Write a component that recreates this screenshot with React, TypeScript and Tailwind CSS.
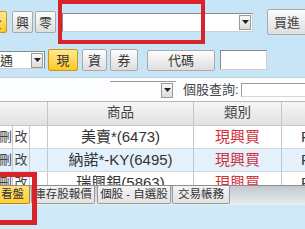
import React from "react";

const btn =
  "flex items-center justify-center shrink-0 border border-[#a9a9a9] rounded-[2px] bg-linear-to-b from-[#fdfdfd] to-[#dedede] text-[13px] text-[#333] leading-none";
const ybtn =
  "flex items-center justify-center shrink-0 border border-[#c49a1c] rounded-[2px] bg-linear-to-b from-[#ffe98a] to-[#ffc61a] text-[13px] text-[#333] leading-none";

function Arrow() {
  return (
    <div className="flex items-center justify-center w-[12px] h-[15px] border border-[#9a9a9a] bg-linear-to-b from-[#f8f8f8] to-[#dcdcdc] shrink-0">
      <svg width="7" height="4" viewBox="0 0 7 4">
        <path d="M0 0h7L3.5 4z" fill="#222" />
      </svg>
    </div>
  );
}

export default function App() {
  return (
    <div className="relative w-[305px] h-[229px] overflow-hidden bg-[#c8e5f7] font-['Liberation_Sans','Noto_Sans_CJK_TC',sans-serif] text-[#333]">
      {/* Row 1 */}
      <div className="flex items-center h-[44px]">
        <div className={`${ybtn} w-[24px] h-[22px] -ml-[17px]`}>全</div>
        <div className={`${btn} w-[21px] h-[22px] ml-[5px]`}>興</div>
        <div className={`${btn} w-[21px] h-[22px] ml-[2px]`}>零</div>
        <div className="flex items-center justify-end w-[191px] h-[19px] ml-[6px] bg-white border border-[#8a8a8a] border-b-[#cfcfcf] border-r-[#cfcfcf] pr-[1px] shrink-0">
          <Arrow />
        </div>
        <div className={`${btn} w-[44px] h-[26px] ml-[14px] justify-start pl-[6px] text-[12.5px] text-[#444]`}>買進</div>
      </div>

      {/* Row 2 */}
      <div className="flex items-center h-[24px] mt-[4px]">
        <div className="flex items-center justify-between w-[70px] h-[18px] -ml-[25px] bg-white border border-[#8a8a8a] border-b-[#cfcfcf] pl-[11px] pr-[1px] shrink-0 text-[13px] leading-none">
          <span>普通</span>
          <Arrow />
        </div>
        <div className={`${ybtn} w-[30px] h-[22px] ml-[3px]`}>現</div>
        <div className={`${btn} w-[25px] h-[22px] ml-[4px]`}>資</div>
        <div className={`${btn} w-[28px] h-[22px] ml-[3px]`}>券</div>
        <div className={`${btn} w-[68px] h-[21px] ml-[9px] text-[12px]`}>代碼</div>
        <div className="w-[47px] h-[20px] ml-[5px] bg-white border border-[#8a8a8a] border-b-[#cfcfcf] border-r-[#cfcfcf] shrink-0" />
      </div>

      {/* Row 3 */}
      <div className="flex items-center h-[24px] mt-[5px] bg-[#fbfdfe] border-t border-[#c4d4de]">
        <div className="flex items-center justify-end w-[66px] h-[17px] ml-[110px] border-t border-[#9a9a9a] pr-[3px] shrink-0">
          <Arrow />
        </div>
        <span className="ml-[7px] text-[13px] leading-none text-[#444] whitespace-nowrap">個股查詢:</span>
        <div className="w-[70px] h-[14px] ml-[2px] bg-white border border-[#9a9a9a] border-b-[#d4d4d4] shrink-0" />
      </div>

      {/* Table */}
      <div className="h-[84px] overflow-hidden bg-white border-t border-[#b9b9b9]">
        <div className="flex h-[24px] bg-linear-to-b from-[#f6f6f6] to-[#e1e1e1] border-b border-[#c6c6c6] text-[13.5px] text-[#444] whitespace-nowrap">
          <div className="w-[48px] border-r border-[#c6c6c6] shrink-0" />
          <div className="w-[146px] border-r border-[#c6c6c6] flex items-center justify-center shrink-0">商品</div>
          <div className="w-[88px] border-r border-[#c6c6c6] flex items-center justify-center shrink-0">類別</div>
          <div className="w-[40px] shrink-0" />
        </div>
        {[
          { name: "美賣*(6473)", bg: "bg-white" },
          { name: "納諾*-KY(6495)", bg: "bg-[#e2f1fc]" },
          { name: "瑞興銀(5863)", bg: "bg-white" },
        ].map((r) => (
          <div key={r.name} className={`flex h-[23px] ${r.bg} border-b border-[#d6d6d6] text-[15px] whitespace-nowrap`}>
            <div className="w-[48px] flex border-r border-[#c6c6c6] shrink-0 text-[13px] text-[#444]">
              <div className="w-[13px] border-r border-[#c6c6c6] flex items-center justify-end overflow-hidden">
                <span>刪</span>
              </div>
              <div className="w-[17px] border-r border-[#c6c6c6] flex items-center justify-center">改</div>
            </div>
            <div className="w-[146px] border-r border-[#c6c6c6] flex items-center justify-center shrink-0 text-[#333]">{r.name}</div>
            <div className="w-[88px] border-r border-[#c6c6c6] flex items-center justify-center shrink-0 text-[#d2303c]">現興買</div>
            <div className="w-[40px] flex items-center pl-[19px] shrink-0 text-[#333]">ROD</div>
          </div>
        ))}
      </div>

      {/* Tab bar */}
      <div className="flex items-start h-[20px] border-t border-[#8e8e8e] bg-linear-to-b from-[#c2c8cd] to-[#e9eef1] text-[11.5px] leading-none whitespace-nowrap">
        <div className="flex items-center justify-end w-[40px] h-[18px] -ml-[10px] pr-[5px] bg-linear-to-b from-[#ffe27a] to-[#ffcf33] border border-t-0 border-[#a08a3a] rounded-b-[2px] shrink-0">看盤</div>
        <div className="flex items-center justify-center w-[64px] h-[18px] ml-[1px] bg-linear-to-b from-[#f4f4f4] to-[#e2e2e2] border border-t-0 border-[#9a9a9a] rounded-b-[2px] shrink-0">庫存股報價</div>
        <div className="flex items-center justify-center w-[74px] h-[18px] ml-[2px] bg-linear-to-b from-[#f4f4f4] to-[#e2e2e2] border border-t-0 border-[#9a9a9a] rounded-b-[2px] shrink-0">個股 - 自選股</div>
        <div className="flex items-center justify-center w-[58px] h-[18px] ml-[1px] bg-linear-to-b from-[#f4f4f4] to-[#e2e2e2] border border-t-0 border-[#9a9a9a] rounded-b-[2px] shrink-0">交易帳務</div>
      </div>
      <div className="h-[24px] bg-[#cfe9f6]" />

      {/* Highlight overlays */}
      <div className="absolute left-[58px] top-0 w-[147px] h-[44px] border-[4px] border-[#d8232a]" />
      <div className="absolute left-[-6px] top-[172px] w-[43px] h-[53px] border-[5px] border-[#d8232a]" />
    </div>
  );
}
